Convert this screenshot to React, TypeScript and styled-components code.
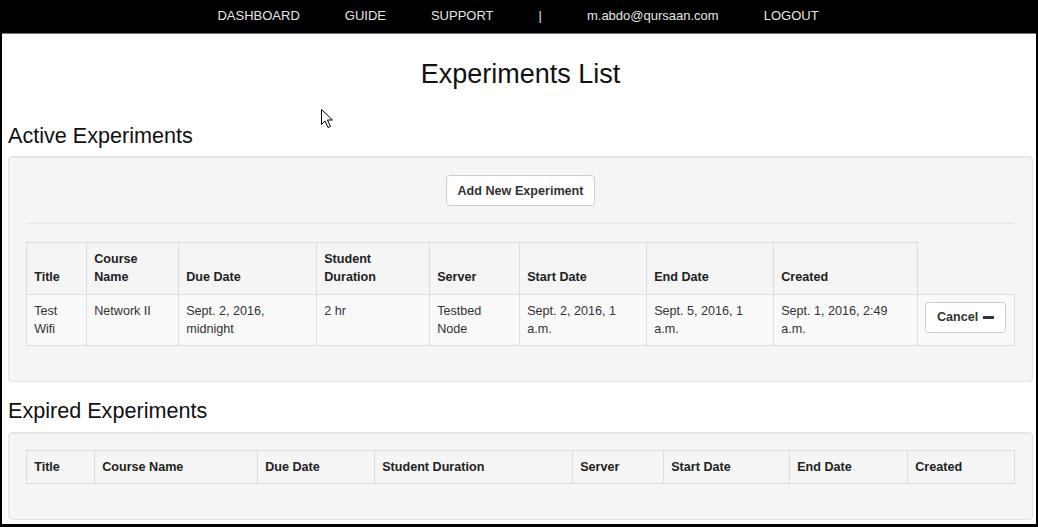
import React from "react";
import styled, { createGlobalStyle } from "styled-components";

const GlobalStyle = createGlobalStyle`
  html, body {
    margin: 0;
    padding: 0;
    background: #000;
  }
  * { box-sizing: border-box; }
  body {
    font-family: "Liberation Sans", Arial, sans-serif;
    font-size: 12.6px;
    line-height: 18px;
    color: #333;
  }
`;

const Frame = styled.div`
  position: relative;
  width: 1038px;
  height: 527px;
  background: #fff;
  border-left: 2px solid #000;
  border-right: 2px solid #000;
  border-bottom: 3px solid #000;
  overflow: hidden;
`;

const NavBar = styled.nav`
  height: 34px;
  background: #000;
  border-bottom: 1px solid #777;
  display: flex;
  justify-content: center;
  padding-right: 2px;
`;

const NavItem = styled.a<{ $lower?: boolean }>`
  display: block;
  padding: 8px 22.5px 0;
  line-height: 15px;
  font-size: 13px;
  color: #e6e6e6;
  text-decoration: none;
  text-transform: ${(p) => (p.$lower ? "none" : "uppercase")};
`;

const Container = styled.main`
  padding: 0 3px 0 6px;
  display: flow-root;
`;

const PageTitle = styled.h2`
  margin: 26px 0 34px;
  text-align: center;
  font-size: 27px;
  line-height: 29.7px;
  font-weight: 400;
  color: #111;
`;

const SectionTitle = styled.h3`
  margin: 17px 0 9px;
  font-size: 21.6px;
  line-height: 23.76px;
  font-weight: 400;
  color: #111;
`;

const Well = styled.section`
  background: #f5f5f5;
  border: 1px solid #e3e3e3;
  border-radius: 4px;
  padding: 17px;
  margin-bottom: 17px;
  box-shadow: inset 0 1px 1px rgba(0, 0, 0, 0.04);
`;

const Center = styled.div`
  display: flex;
  justify-content: center;
  padding-top: 1px;
`;

const Button = styled.button`
  display: inline-flex;
  align-items: center;
  gap: 4px;
  font-family: inherit;
  font-size: 12.6px;
  line-height: 18px;
  font-weight: 700;
  color: #333;
  background: #fff;
  border: 1px solid #ccc;
  border-radius: 3.6px;
  padding: 5.4px 10.8px;
  cursor: pointer;
  white-space: nowrap;
`;

const MinusIcon = styled.span`
  display: inline-block;
  width: 11px;
  height: 3px;
  margin-left: 1px;
  background: #333;
`;

const Rule = styled.hr`
  margin: 17px 0 18px;
  border: 0;
  border-top: 1px solid #e8e8e8;
`;

const Table = styled.table`
  width: 988px;
  table-layout: fixed;
  border-collapse: collapse;
  margin-bottom: 18px;
`;

const Th = styled.th`
  text-align: left;
  vertical-align: bottom;
  font-weight: 700;
  padding: 7.2px;
  border: 1px solid #ddd;
  color: #222;
`;

const Tr = styled.tr<{ $striped?: boolean }>`
  background: ${(p) => (p.$striped ? "#f9f9f9" : "transparent")};
`;

const Td = styled.td`
  vertical-align: top;
  padding: 7.2px;
  border: 1px solid #ddd;
`;

const Cursor = styled.svg`
  position: absolute;
  left: 318px;
  top: 108px;
`;

const activeCols = [60, 92, 138, 113, 90, 127, 127, 144, 97];
const activeHeaders = [
  "Title",
  "Course Name",
  "Due Date",
  "Student Duration",
  "Server",
  "Start Date",
  "End Date",
  "Created",
];
const activeRow = [
  "Test Wifi",
  "Network II",
  "Sept. 2, 2016, midnight",
  "2 hr",
  "Testbed Node",
  "Sept. 2, 2016, 1 a.m.",
  "Sept. 5, 2016, 1 a.m.",
  "Sept. 1, 2016, 2:49 a.m.",
];

const expiredCols = [68, 163, 117, 198, 91, 126, 118, 107];

export default function App() {
  return (
    <>
      <GlobalStyle />
      <Frame>
        <NavBar>
          <NavItem href="#">Dashboard</NavItem>
          <NavItem href="#">Guide</NavItem>
          <NavItem href="#">Support</NavItem>
          <NavItem as="span">|</NavItem>
          <NavItem href="#" $lower>
            m.abdo@qursaan.com
          </NavItem>
          <NavItem href="#">Logout</NavItem>
        </NavBar>
        <Container>
          <PageTitle>Experiments List</PageTitle>

          <SectionTitle>Active Experiments</SectionTitle>
          <Well>
            <Center>
              <Button>Add New Experiment</Button>
            </Center>
            <Rule />
            <Table>
              <colgroup>
                {activeCols.map((w, i) => (
                  <col key={i} style={{ width: w }} />
                ))}
              </colgroup>
              <thead>
                <tr>
                  {activeHeaders.map((h) => (
                    <Th key={h}>{h}</Th>
                  ))}
                </tr>
              </thead>
              <tbody>
                <Tr $striped>
                  {activeRow.map((c, i) => (
                    <Td key={i}>{c}</Td>
                  ))}
                  <Td>
                    <Button>
                      Cancel <MinusIcon />
                    </Button>
                  </Td>
                </Tr>
              </tbody>
            </Table>
          </Well>

          <SectionTitle>Expired Experiments</SectionTitle>
          <Well>
            <Table>
              <colgroup>
                {expiredCols.map((w, i) => (
                  <col key={i} style={{ width: w }} />
                ))}
              </colgroup>
              <thead>
                <tr>
                  {activeHeaders.map((h) => (
                    <Th key={h}>{h}</Th>
                  ))}
                </tr>
              </thead>
            </Table>
          </Well>
        </Container>
        <Cursor width="14" height="21" viewBox="0 0 14 21">
          <path
            d="M1.5 1.5 L1.5 16.5 L5 13 L8 19.5 L10.5 18.5 L7.5 12 L12.5 12 Z"
            fill="#fff"
            stroke="#000"
            strokeWidth="1"
            strokeLinejoin="miter"
          />
        </Cursor>
      </Frame>
    </>
  );
}
